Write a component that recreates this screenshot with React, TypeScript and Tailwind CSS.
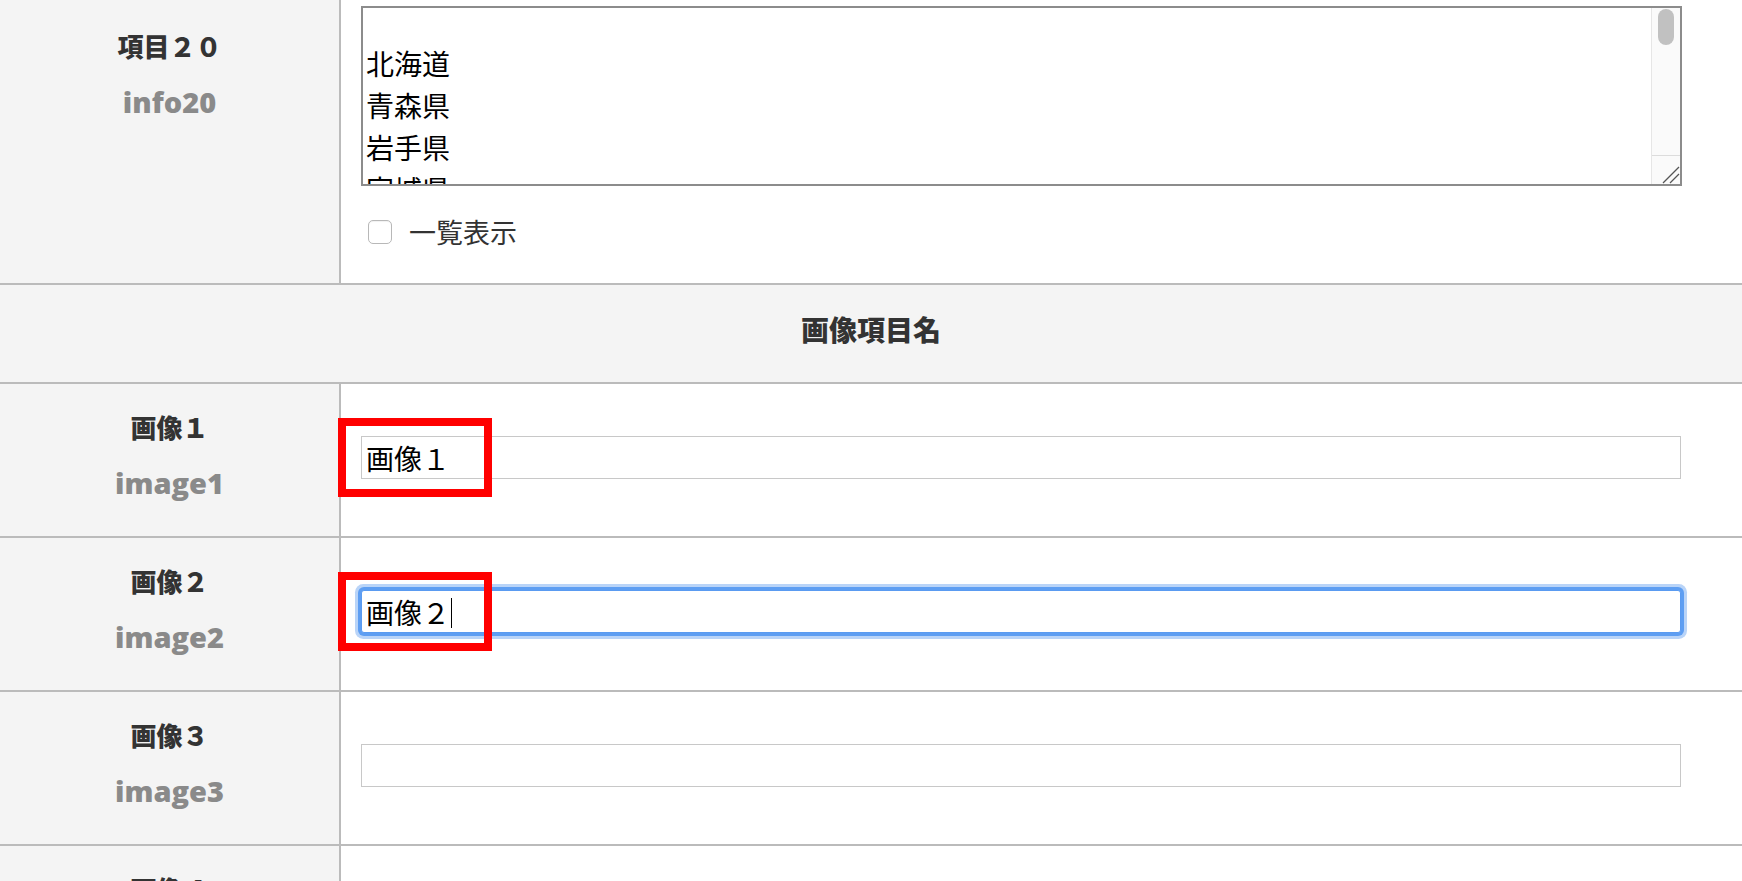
import React from 'react';

const jp = "font-['Noto_Sans_CJK_JP',sans-serif]";

const LabelCell = ({ name, code, top }: { name: string; code: string; top: string }) => (
  <div className={`w-[341px] shrink-0 bg-[#f4f4f4] border-r-2 border-[#bbbbbb] flex flex-col items-center ${top}`}>
    <div className={`${jp} text-[26px] leading-[40px] font-black text-[#333333]`}>{name}</div>
    <div className="font-['Open_Sans',sans-serif] text-[29px] leading-[40px] font-extrabold text-[#8a8a8a] mt-[16px]">
      {code}
    </div>
  </div>
);

const ImageRow = ({
  n,
  value,
  focused,
  marked,
}: {
  n: number;
  value?: string;
  focused?: boolean;
  marked?: boolean;
}) => {
  const zen = ['０', '１', '２', '３', '４', '５'][n];
  return (
    <div className="flex h-[154px] border-b-2 border-[#bbbbbb]">
      <LabelCell name={`画像${zen}`} code={`image${n}`} top="pt-[23px]" />
      <div className="relative flex-1 bg-white pl-[20px] pt-[52px]">
        <div className="relative w-[1320px]">
          <input
            type="text"
            defaultValue={value ?? ''}
            className={
              focused
                ? `${jp} w-full h-[43px] bg-white border border-[#5a9bf1] rounded-[3px] pl-[4px] text-[28px] text-black outline-none shadow-[0_0_0_3px_#5e9ef2,0_0_0_6px_#b9d4f8]`
                : `${jp} w-full h-[43px] bg-white border border-[#c8c8c8] pl-[4px] text-[28px] text-black outline-none`
            }
          />
          {focused && <span className="absolute left-[90px] top-[8px] h-[30px] w-px bg-black" />}
        </div>
        {marked && (
          <div className="absolute left-[-3px] top-[34px] z-10 w-[154px] h-[79px] border-[8px] border-[#ff0000]" />
        )}
      </div>
    </div>
  );
};

export default function App() {
  return (
    <div className={`${jp} w-[1742px] h-[881px] overflow-hidden bg-white`}>
      {/* 項目20 */}
      <div className="flex h-[285px] border-b-2 border-[#bbbbbb]">
        <LabelCell name="項目２０" code="info20" top="pt-[26px]" />
        <div className="flex-1 bg-white pl-[20px] pt-[6px]">
          <div className="relative w-[1321px] h-[180px] border-2 border-[#8c8c8c] bg-white">
            <textarea
              readOnly
              defaultValue={'北海道\n青森県\n岩手県\n宮城県\n秋田県\n山形県\n福島県'}
              className={`${jp} block w-full h-full resize-none overflow-hidden pl-[3px] pr-[30px] pt-[34px] text-[28px] leading-[42px] text-black outline-none bg-transparent`}
            />
            <div className="absolute top-0 right-0 bottom-0 w-[29px] bg-[#fafafa] border-l border-[#e6e6e6]">
              <div className="absolute top-[1px] left-[6px] w-[16px] h-[36px] rounded-full bg-[#c1c1c1]" />
              <div className="absolute bottom-0 left-0 right-0 h-[29px] border-t border-[#dcdcdc]">
                <svg className="absolute right-0 bottom-0" width="28" height="28" viewBox="0 0 28 28">
                  <line x1="11" y1="27" x2="27" y2="11" stroke="#555" strokeWidth="1.2" />
                  <line x1="18" y1="27" x2="27" y2="18" stroke="#555" strokeWidth="1.2" />
                </svg>
              </div>
            </div>
          </div>
          <div className="mt-[26px] h-[40px] flex items-center pl-[7px] gap-[17px]">
            <input
              type="checkbox"
              className="appearance-none w-[24px] h-[24px] rounded-[5px] border border-[#b8b8b8] bg-white shadow-[inset_0_1px_1px_rgba(0,0,0,0.06)]"
            />
            <span className="text-[27px] leading-[40px] text-[#333333]">一覧表示</span>
          </div>
        </div>
      </div>

      {/* 画像項目名 */}
      <div className="h-[99px] border-b-2 border-[#bbbbbb] bg-[#f4f4f4] flex items-center justify-center pb-[10px]">
        <span className="text-[28px] font-black text-[#333333]">画像項目名</span>
      </div>

      <ImageRow n={1} value="画像１" marked />
      <ImageRow n={2} value="画像２" focused marked />
      <ImageRow n={3} />
      <ImageRow n={4} />
    </div>
  );
}
